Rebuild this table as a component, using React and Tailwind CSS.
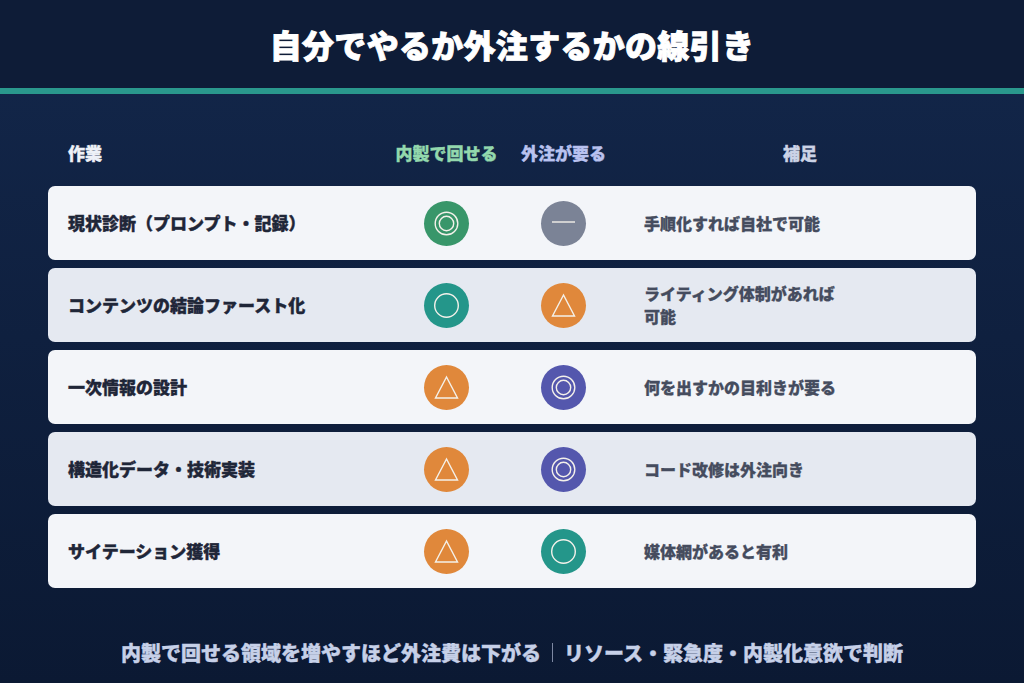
const rows = [
  { task: "現状診断（プロンプト・記録）", inhouse: "double", inColor: "bg-[#38966a]", out: "dash", outColor: "bg-[#7b8396]", note: "手順化すれば自社で可能", light: true },
  { task: "コンテンツの結論ファースト化", inhouse: "circle", inColor: "bg-[#24968a]", out: "triangle", outColor: "bg-[#e0883b]", note: "ライティング体制があれば可能", light: false },
  { task: "一次情報の設計", inhouse: "triangle", inColor: "bg-[#e0883b]", out: "double", outColor: "bg-[#5457ad]", note: "何を出すかの目利きが要る", light: true },
  { task: "構造化データ・技術実装", inhouse: "triangle", inColor: "bg-[#e0883b]", out: "double", outColor: "bg-[#5457ad]", note: "コード改修は外注向き", light: false },
  { task: "サイテーション獲得", inhouse: "triangle", inColor: "bg-[#e0883b]", out: "circle", outColor: "bg-[#24968a]", note: "媒体網があると有利", light: true },
];

const Mark = ({ kind, color }) => {
  return (
    <div className={`w-[45px] h-[45px] rounded-full flex items-center justify-center ${color}`}>
      <svg width="45" height="45" viewBox="-22.5 -22.5 45 45" fill="none" stroke="#f4f1ea" strokeWidth="1.4">
        {kind === "double" && (
          <>
            <circle r="11.3" />
            <circle r="7.2" />
          </>
        )}
        {kind === "circle" && <circle r="11.8" />}
        {kind === "triangle" && <polygon points="0,-10.5 -11,10.5 11,10.5" strokeLinejoin="miter" />}
        {kind === "dash" && <line x1="-11.5" y1="-1.5" x2="11.5" y2="-1.5" />}
      </svg>
    </div>
  );
};

export default function App() {
  return (
    <div
      className="w-[1024px] h-[683px] flex flex-col bg-gradient-to-b from-[#13274b] to-[#0b1933] overflow-hidden"
      style={{ fontFamily: '"Noto Sans CJK JP", "Noto Sans", sans-serif' }}
    >
      <div className="h-[88px] bg-[#0e1c37] flex items-center justify-center">
        <h1 className="text-[32px] font-black text-white tracking-[0.3px] pb-[1px] [-webkit-text-stroke:0.9px_#ffffff]">
          自分でやるか外注するかの線引き
        </h1>
      </div>
      <div className="h-[6px] bg-[#2a988c]" />

      <div className="px-[48px] pt-[26px]">
        <div className="grid grid-cols-[320px_117px_117px_1fr] px-5 h-[66px] items-center text-[17px] font-black [-webkit-text-stroke:0.4px_currentColor]">
          <div className="text-[#eef1f7]">作業</div>
          <div className="text-center text-[#93d8ad]">内製で回せる</div>
          <div className="text-center text-[#b9c2ef]">外注が要る</div>
          <div className="text-center pl-[22px] text-[#cbd3e6]">補足</div>
        </div>

        <div className="flex flex-col gap-2">
          {rows.map((r) => (
            <div
              key={r.task}
              className={`grid grid-cols-[320px_117px_117px_1fr] items-center px-5 h-[74px] rounded-[7px] ${r.light ? "bg-[#f3f5f9]" : "bg-[#e5e9f1]"}`}
            >
              <div className="text-[17px] font-black text-[#1f2638] [-webkit-text-stroke:0.4px_#1f2638]">{r.task}</div>
              <div className="flex justify-center">
                <Mark kind={r.inhouse} color={r.inColor} />
              </div>
              <div className="flex justify-center">
                <Mark kind={r.out} color={r.outColor} />
              </div>
              <div className="pl-[22px]">
                <p className="w-[205px] text-[16px] leading-[23px] font-black text-[#454c5e] [-webkit-text-stroke:0.3px_#454c5e]">{r.note}</p>
              </div>
            </div>
          ))}
        </div>
      </div>

      <div className="flex-1 flex items-center justify-center pt-[34px]">
        <p className="text-[20px] font-black text-[#c6d0e8] flex items-center [-webkit-text-stroke:0.4px_#c6d0e8]">
          <span>内製で回せる領域を増やすほど外注費は下がる</span>
          <span className="inline-block w-px h-[19px] bg-[#7d88a2] mx-[11px]" />
          <span>リソース・緊急度・内製化意欲で判断</span>
        </p>
      </div>
    </div>
  );
}
